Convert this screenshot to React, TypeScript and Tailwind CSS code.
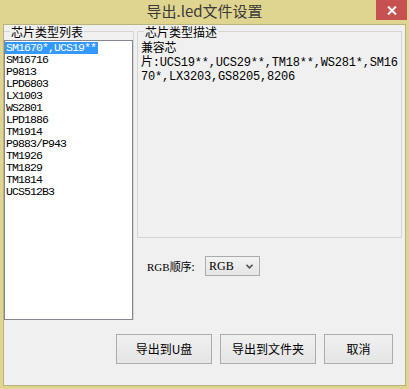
import React from 'react'

const chips = [
  'SM1670*,UCS19**',
  'SM16716',
  'P9813',
  'LPD6803',
  'LX1003',
  'WS2801',
  'LPD1886',
  'TM1914',
  'P9883/P943',
  'TM1926',
  'TM1829',
  'TM1814',
  'UCS512B3',
]

const App = () => {
  return (
    <div className="w-[409px] h-[389px] bg-[#e0d590] flex flex-col font-['Noto_Sans_CJK_SC',sans-serif] text-black">
      {/* title bar */}
      <div className="relative h-[24px] shrink-0 flex items-center justify-center pb-[2px]">
        <span className="text-[15px] leading-[20px] text-[#3a3a3a]">导出.led文件设置</span>
        <div className="absolute right-[2px] top-0 w-[31px] h-[20px] bg-[#c75050] flex items-center justify-center">
          <svg width="10" height="9" viewBox="0 0 10 9">
            <path d="M1 0.5 L9 8.5 M9 0.5 L1 8.5" stroke="white" strokeWidth="2" />
          </svg>
        </div>
      </div>

      {/* client area */}
      <div className="ml-[3px] w-[403px] h-[362px] bg-[#f0f0f0] border border-[#bbb27c] flex flex-col">
        <div className="flex">
          {/* chip list */}
          <fieldset className="w-[130px] h-[295px] border-t border-r border-[#d5d5d5]">
            <legend className="ml-[6px] px-[1px] text-[12px] leading-[13px]">芯片类型列表</legend>
            <div className="mt-[2px] w-[129px] h-[280px] bg-white border border-[#828790] pt-[1px] font-['Liberation_Mono',monospace] text-[11.5px] tracking-[-0.9px] leading-[12px]">
              {chips.map((c, i) => (
                <div key={c} className="h-[12px]">
                  <span className={i === 0 ? 'inline-block h-[12px] pl-[1px] pr-[2px] bg-[#3399ff] text-white' : 'inline-block h-[12px] pl-[1px]'}>
                    {c}
                  </span>
                </div>
              ))}
            </div>
          </fieldset>

          <div className="ml-[3px] flex flex-col">
            {/* description */}
            <fieldset className="w-[265px] h-[213px] border border-[#d5d5d5]">
              <legend className="ml-[6px] px-[1px] text-[12px] leading-[13px]">芯片类型描述</legend>
              <div className="pt-[4px] pl-[3px] font-['Liberation_Mono','Noto_Sans_CJK_SC',monospace] text-[12px] leading-[14px] tracking-[-0.2px]">
                <div>兼容芯</div>
                <div>片:UCS19**,UCS29**,TM18**,WS281*,SM16</div>
                <div>70*,LX3203,GS8205,8206</div>
              </div>
            </fieldset>

            {/* rgb order */}
            <div className="mt-[18px] ml-[10px] flex items-center h-[20px]">
              <span className="w-[58px] text-[11px] leading-[12px]">
                <span className="font-['Liberation_Serif',serif] text-[11px]">RGB</span>顺序:
              </span>
              <div className="w-[55px] h-[20px] border border-[#acacac] bg-linear-to-b from-[#f2f2f2] to-[#e5e5e5] flex items-center justify-between pl-[3px] pr-[6px]">
                <span className="font-['Liberation_Serif',serif] text-[12px] leading-[12px]">RGB</span>
                <svg width="7" height="5" viewBox="0 0 7 5">
                  <path d="M0.5 0.8 L3.5 3.8 L6.5 0.8" stroke="#555" strokeWidth="1.6" fill="none" />
                </svg>
              </div>
            </div>
          </div>
        </div>

        {/* buttons */}
        <div className="mt-[14px] flex justify-end gap-[8px] pr-[12px]">
          <button className="w-[96px] h-[30px] border border-[#acacac] bg-linear-to-b from-[#f0f0f0] to-[#e5e5e5] text-[12px]">导出到U盘</button>
          <button className="w-[96px] h-[30px] border border-[#acacac] bg-linear-to-b from-[#f0f0f0] to-[#e5e5e5] text-[12px]">导出到文件夹</button>
          <button className="w-[69px] h-[30px] border border-[#acacac] bg-linear-to-b from-[#f0f0f0] to-[#e5e5e5] text-[12px]">取消</button>
        </div>
      </div>
    </div>
  )
}

export default App
